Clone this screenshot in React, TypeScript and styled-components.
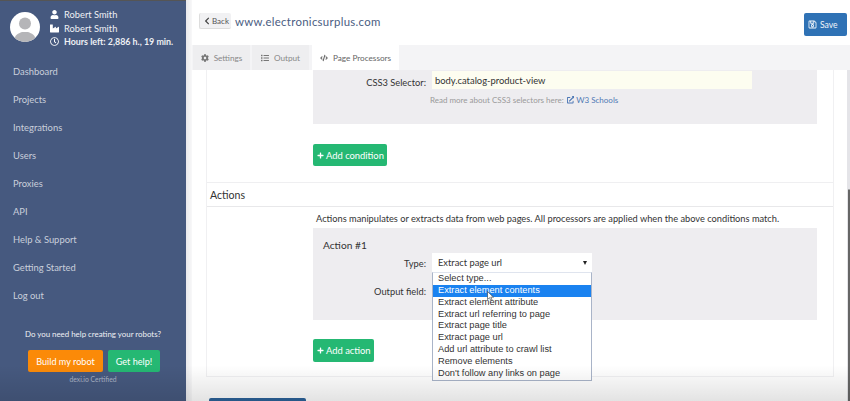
import React from "react";
import styled, { createGlobalStyle } from "styled-components";
import { FaUser, FaIndustry, FaRegClock, FaCog, FaList, FaCode, FaPlus, FaChevronLeft, FaRegSave, FaExternalLinkAlt } from "react-icons/fa";

const Global = createGlobalStyle`
  html, body { margin: 0; padding: 0; height: 100%; overflow: hidden; background: #fff; }
  * { box-sizing: border-box; }
  body { font-family: Lato, "Open Sans", "Liberation Sans", sans-serif; }
`;

const Page = styled.div`
  position: relative; display: flex; width: 850px; height: 401px; overflow: hidden; background: #fff;
`;
const BottomShade = styled.div`
  position: absolute; left: 0; right: 0; bottom: 0; height: 36px; pointer-events: none; z-index: 5;
  background: linear-gradient(to bottom, rgba(0,0,0,0), rgba(0,0,0,0.11));
`;
const Sidebar = styled.aside`
  width: 186px; flex: none; background: #46597f; border-top: 1px solid #555; display: flex; flex-direction: column;
`;
const Profile = styled.div`
  display: flex; align-items: flex-start; padding: 7px 0 0 10px; height: 55px;
`;
const Avatar = styled.div`
  width: 30px; height: 30px; margin-top: 4px; border-radius: 50%; background: #fff; overflow: hidden; flex: none;
  svg { display: block; }
`;
const ProfileLines = styled.div`
  margin-left: 9px; display: flex; flex-direction: column;
`;
const ProfileLine = styled.div<{ $bold?: boolean }>`
  display: flex; align-items: center; height: 13.5px; color: #eef0f4; white-space: nowrap;
  font-size: ${p => (p.$bold ? "8.9px" : "9.3px")}; font-weight: ${p => (p.$bold ? 700 : 400)};
  svg { width: 9px; height: 9px; margin: 0 5px 0 1px; color: #fff; flex: none; }
`;
const Nav = styled.nav`
  display: flex; flex-direction: column; padding-top: 1px;
`;
const NavItem = styled.a`
  display: flex; align-items: center; height: 28px; padding-left: 13px; font-size: 9.4px; color: #c9cfdb;
`;
const HelpBox = styled.div`
  display: flex; flex-direction: column; align-items: center; margin-top: 20px;
`;
const HelpTitle = styled.div`
  font-size: 7.9px; color: #eef0f4; white-space: nowrap; width: 186px; text-align: center;
`;
const HelpButtons = styled.div`
  display: flex; gap: 5px; margin: 11px 0 0 2px;
`;
const HelpButton = styled.button<{ $bg: string; $w: number }>`
  width: ${p => p.$w}px; height: 22px; border: 0; border-radius: 2px; padding: 0; background: ${p => p.$bg}; color: #fff;
  font: 400 9.1px Lato, sans-serif;
`;
const Certified = styled.div`
  font-size: 6.8px; color: #aab3c5; margin-top: 3px;
`;
const Gutter = styled.div`
  width: 6px; flex: none; background: linear-gradient(to right, #e9e9ec, #f8f8f9);
`;
const Main = styled.main`
  flex: 1; min-width: 0; display: flex; flex-direction: column; position: relative;
`;
const Header = styled.header`
  height: 45px; flex: none; display: flex; align-items: flex-start; padding: 13px 3px 0 7px; background: #fff;
`;
const BackButton = styled.button`
  display: flex; align-items: center; height: 16px; width: 32px; padding: 0 0 0 4px; background: #f1f1f3;
  border: 0; border-bottom: 1px solid #ddd; border-left: 1px solid #ddd; border-radius: 2px; color: #555; font: 400 8px Lato, sans-serif;
  svg { width: 6px; height: 8px; margin-right: 2px; color: #444; }
`;
const SiteTitle = styled.div`
  margin: 0 0 0 4px; font-size: 11.4px; letter-spacing: 0.3px; color: #4a5d82; line-height: 18px;
`;
const SaveButton = styled.button`
  margin-left: auto; display: flex; align-items: center; width: 43px; height: 23px; padding: 0 0 0 4px; border: 0; border-radius: 2px;
  background: #2f72b5; color: #f1f5fa; font: 400 8.6px Lato, sans-serif;
  svg { width: 9px; height: 9px; margin-right: 3px; }
`;
const TabBar = styled.div`
  height: 25px; flex: none; display: flex; background: #f4f4f6; padding-left: 1px; gap: 2px;
`;
const Tab = styled.div<{ $active?: boolean; $w: number }>`
  width: ${p => p.$w}px; display: flex; align-items: center; justify-content: center; font-size: 8.2px; white-space: nowrap;
  background: ${p => (p.$active ? "#fff" : "#eeeef0")}; color: ${p => (p.$active ? "#666" : "#888")};
  margin-left: ${p => (p.$active ? "1px" : "0")};
  svg { width: 8px; height: 8px; margin-right: 5px; color: ${p => (p.$active ? "#666" : "#777")}; }
`;
const Content = styled.div`
  flex: 1; display: flex; min-height: 0;
`;
const Panel = styled.section`
  margin-left: 14px; width: 628px; height: 307px; flex: none; border: 1px solid #f0f0f2; border-top: 0;
`;
const Body = styled.div`
  padding-left: 106px;
`;
const GreyBox = styled.div<{ $h: number }>`
  width: 504px; height: ${p => p.$h}px; background: #eeedf0; position: relative;
`;
const FieldRow = styled.div`
  display: flex; align-items: flex-start;
`;
const FieldLabel = styled.label<{ $top?: number }>`
  width: 113px; text-align: right; font-size: 9.3px; line-height: 12px; color: #333; flex: none; white-space: nowrap;
  padding-top: ${p => p.$top ?? 0}px;
`;
const TextInput = styled.div`
  margin: 1px 0 0 6px; width: 320px; height: 18px; background: #fdfdf0; display: flex; align-items: center; padding-left: 3px;
  font-size: 9.4px; color: #333;
`;
const Hint = styled.div`
  margin: 6px 0 0 117px; font-size: 8px; color: #999; display: flex; align-items: center; white-space: nowrap;
`;
const HintLink = styled.a`
  color: #4f79b5; margin-left: 3px; display: inline-flex; align-items: center;
  svg { width: 7.5px; height: 7.5px; margin-right: 2px; }
`;
const AddButton = styled.button<{ $w: number; $mt: number; $h: number }>`
  display: flex; align-items: center; justify-content: flex-start; width: ${p => p.$w}px; height: ${p => p.$h}px; margin-top: ${p => p.$mt}px;
  border: 0; border-radius: 2px; padding: 0 0 0 4px; background: #25b873; color: #fff; font: 400 9.4px Lato, sans-serif; white-space: nowrap;
  svg { width: 7px; height: 7px; margin-right: 2px; }
`;
const SectionHead = styled.h3`
  margin: 16px 0 0 0; height: 25px; width: 626px; border-top: 1px solid #efeff1; border-bottom: 1px solid #e8e8ea;
  display: flex; align-items: center; padding-left: 3px; font: 400 10.6px Lato, sans-serif; color: #333;
`;
const Intro = styled.p`
  margin: 0; height: 21px; padding: 6px 0 0 3px; font-size: 9.26px; color: #333; white-space: nowrap; line-height: 12px;
`;
const ActionTitle = styled.div`
  padding: 11px 0 0 10px; height: 25px; font-size: 10.2px; color: #333; line-height: 12px;
`;
const TypeSelect = styled.div`
  margin-left: 6px; width: 160px; height: 19px; background: #fff; display: flex; align-items: center; justify-content: space-between;
  padding: 0 5px 0 6px; font-size: 9.3px; color: #333;
`;
const Caret = styled.span`
  width: 0; height: 0; border-left: 2.5px solid transparent; border-right: 2.5px solid transparent; border-top: 4px solid #222;
`;
const OutputRow = styled(FieldRow)`
  margin-top: 14px;
`;
const OptionList = styled.ul`
  position: absolute; left: 119px; top: 44px; width: 160px; margin: 0; padding: 0; list-style: none; background: #fff;
  border: 1px solid #a9b4c8; border-top: 1px solid #dfe4ee; z-index: 3;
`;
const Option = styled.li<{ $selected?: boolean }>`
  height: 11.85px; line-height: 11.85px; padding-left: 5px; font-size: 9.25px; font-family: "Liberation Sans", Arial, sans-serif; white-space: nowrap;
  color: ${p => (p.$selected ? "#fff" : "#333")}; background: ${p => (p.$selected ? "#1a82f0" : "transparent")};
`;
const Cursor = styled.svg`
  position: absolute; left: 487px; top: 291px; width: 7px; height: 10px; z-index: 6;
`;
const SubmitBar = styled.div`
  position: absolute; left: 17px; top: 398px; width: 97px; height: 10px; background: #2c6299; border-radius: 2px 2px 0 0;
`;
const RightRail = styled.div`
  width: 3px; height: 100%; margin-left: auto; flex: none; background-color: #e4e4e8;
  background-image: linear-gradient(to bottom, transparent 119px, #666 120px);
  background-size: 2px 100%; background-position: right top; background-repeat: no-repeat;
`;

const navItems = ["Dashboard", "Projects", "Integrations", "Users", "Proxies", "API", "Help & Support", "Getting Started", "Log out"];
const options = ["Select type...", "Extract element contents", "Extract element attribute", "Extract url referring to page", "Extract page title", "Extract page url", "Add url attribute to crawl list", "Remove elements", "Don't follow any links on page"];

export default function App() {
  return (
    <Page>
      <Global />
      <Sidebar>
        <Profile>
          <Avatar>
            <svg viewBox="0 0 30 30" width="30" height="30">
              <circle cx="15" cy="11.5" r="6" fill="#b5b5b8" />
              <path d="M5 30v-4c0-3 3-4.500 7-6h6c4 1.500 7 3 7 6v4z" fill="#b5b5b8" />
            </svg>
          </Avatar>
          <ProfileLines>
            <ProfileLine><FaUser />Robert Smith</ProfileLine>
            <ProfileLine><FaIndustry />Robert Smith</ProfileLine>
            <ProfileLine $bold><FaRegClock />Hours left: 2,886 h., 19 min.</ProfileLine>
          </ProfileLines>
        </Profile>
        <Nav>
          {navItems.map(n => <NavItem key={n}>{n}</NavItem>)}
        </Nav>
        <HelpBox>
          <HelpTitle>Do you need help creating your robots?</HelpTitle>
          <HelpButtons>
            <HelpButton $bg="#fb8a08" $w={75}>Build my robot</HelpButton>
            <HelpButton $bg="#25b873" $w={52}>Get help!</HelpButton>
          </HelpButtons>
          <Certified>dexi.io Certified</Certified>
        </HelpBox>
      </Sidebar>
      <Gutter />
      <Main>
        <Header>
          <BackButton><FaChevronLeft />Back</BackButton>
          <SiteTitle>www.electronicsurplus.com</SiteTitle>
          <SaveButton><FaRegSave />Save</SaveButton>
        </Header>
        <TabBar>
          <Tab $w={57}><FaCog />Settings</Tab>
          <Tab $w={57}><FaList />Output</Tab>
          <Tab $w={87} $active><FaCode />Page Processors</Tab>
        </TabBar>
        <Content>
          <Panel>
            <Body>
              <GreyBox $h={54}>
                <FieldRow>
                  <FieldLabel $top={7}>CSS3 Selector:</FieldLabel>
                  <TextInput>body.catalog-product-view</TextInput>
                </FieldRow>
                <Hint>
                  Read more about CSS3 selectors here:
                  <HintLink><FaExternalLinkAlt />W3 Schools</HintLink>
                </Hint>
              </GreyBox>
              <AddButton $w={74} $h={22} $mt={20}><FaPlus />Add condition</AddButton>
            </Body>
            <SectionHead>Actions</SectionHead>
            <Body>
              <Intro>Actions manipulates or extracts data from web pages. All processors are applied when the above conditions match.</Intro>
              <GreyBox $h={92}>
                <ActionTitle>Action #1</ActionTitle>
                <FieldRow>
                  <FieldLabel $top={5}>Type:</FieldLabel>
                  <TypeSelect>Extract page url<Caret /></TypeSelect>
                </FieldRow>
                <OutputRow>
                  <FieldLabel>Output field:</FieldLabel>
                </OutputRow>
                <OptionList>
                  {options.map((o, i) => <Option key={o} $selected={i === 1}>{o}</Option>)}
                </OptionList>
              </GreyBox>
              <AddButton $w={61} $h={23} $mt={19}><FaPlus />Add action</AddButton>
            </Body>
          </Panel>
          <RightRail />
        </Content>
        <SubmitBar />
      </Main>
      <Cursor viewBox="0 0 7 10">
        <path d="M0.500 0.500v8l2-1.800 1.300 3 1.300-.6-1.300-2.900h2.700z" fill="#fff" stroke="#333" strokeWidth="0.600" />
      </Cursor>
      <BottomShade />
    </Page>
  );
}
